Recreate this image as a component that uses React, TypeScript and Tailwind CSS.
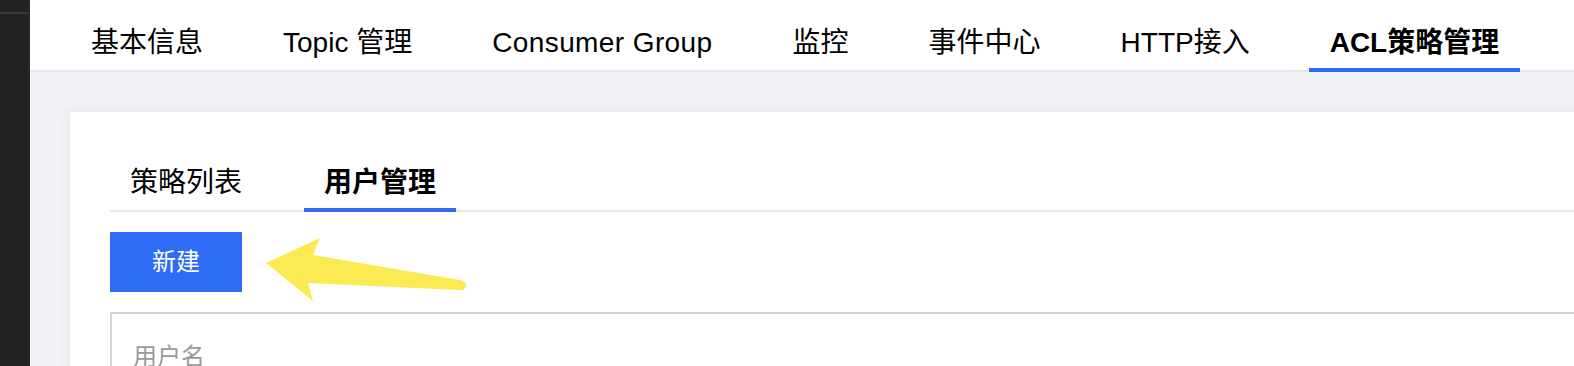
const NAV_TABS = [
  { label: '基本信息', cls: '' },
  { label: 'Topic 管理', cls: '' },
  { label: 'Consumer Group', cls: 'tracking-[0.4px]' },
  { label: '监控', cls: '' },
  { label: '事件中心', cls: '' },
  { label: 'HTTP接入', cls: '' },
  { label: 'ACL策略管理', cls: '' },
];
const ACTIVE_NAV = 'ACL策略管理';

const SUB_TABS = ['策略列表', '用户管理'];
const ACTIVE_SUB = '用户管理';

const FONT = "font-['Liberation_Sans','Noto_Sans_CJK_SC',sans-serif]";

export default function App() {
  return (
    <div className={`relative flex h-[366px] w-[1574px] overflow-hidden bg-[#f2f3f7] text-black ${FONT}`}>
      {/* dark editor strip on the left */}
      <div className="flex w-[30px] shrink-0 flex-col border-r-2 border-[#2a2a2a] bg-[#222222]">
        <div className="mt-[12px] h-[2px] bg-[#3a3a3a]" />
      </div>

      <div className="flex min-w-0 flex-1 flex-col">
        {/* top nav */}
        <nav className="flex h-[72px] shrink-0 gap-[38px] border-b-2 border-[#e6e8ed] bg-white pl-[40px]">
          {NAV_TABS.map((t) => {
            const active = t.label === ACTIVE_NAV;
            return (
              <div key={t.label} className="relative h-[70px] px-[21px] pt-[23px]">
                <span className={`block whitespace-nowrap text-[28px] leading-[40px] ${t.cls} ${active ? 'font-bold' : ''}`}>
                  {t.label}
                </span>
                {active && <span className="absolute inset-x-0 -bottom-[2px] h-[4px] bg-[#2e6cf6]" />}
              </div>
            );
          })}
        </nav>

        {/* content */}
        <div className="flex-1 pl-[40px] pt-[40px]">
          <div className="mr-[-40px] h-full bg-white pl-[40px] pt-[51px] shadow-[0_0_12px_rgba(0,0,0,0.08)]">
            <div className="flex gap-[42px] border-b-2 border-[#e6e8ed]">
              {SUB_TABS.map((t) => {
                const active = t === ACTIVE_SUB;
                return (
                  <div key={t} className="relative -mb-[2px] px-[20px] pb-[9px]">
                    <span className={`block whitespace-nowrap text-[28px] leading-[40px] ${active ? 'font-bold' : ''}`}>
                      {t}
                    </span>
                    {active && <span className="absolute inset-x-0 bottom-0 h-[4px] bg-[#2e6cf6]" />}
                  </div>
                );
              })}
            </div>

            <button
              type="button"
              className="mt-[20px] flex h-[60px] w-[132px] items-center justify-center bg-[#2e6cf6] text-[24px] text-white"
            >
              新建
            </button>

            <div className="mt-[20px] h-[120px] border-2 border-r-0 border-[#d0d3db] pl-[21px] pt-[25px]">
              <span className="text-[24px] leading-[36px] text-[#9a9a9a]">用户名</span>
            </div>
          </div>
        </div>
      </div>

      {/* yellow annotation arrow */}
      <svg className="pointer-events-none absolute left-0 top-0" width="1574" height="366" viewBox="0 0 1574 366">
        <path
          d="M266 263 L320 238 L313 255 L460 280 Q467 282 466 286 Q465 291 459 290 L308 283 L313 301 Z"
          fill="#fcea52"
        />
      </svg>
    </div>
  );
}
